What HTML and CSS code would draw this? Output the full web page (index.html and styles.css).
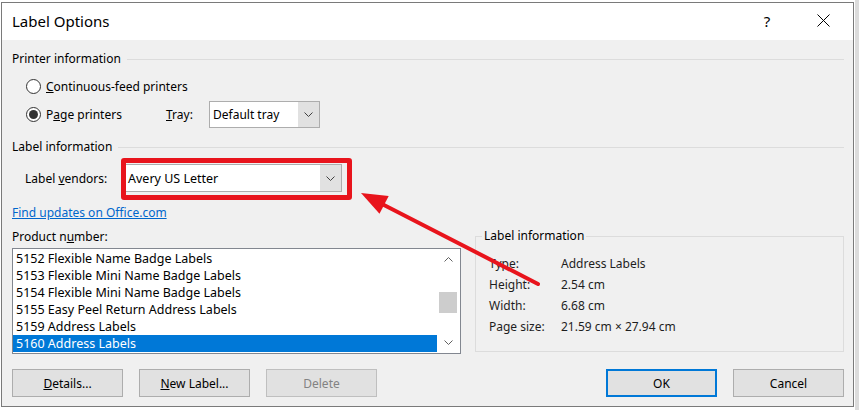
FILE: index.html
```html
<!DOCTYPE html>
<html lang="en">

<head>
    <meta charset="UTF-8">
    <meta name="viewport" content="width=device-width, initial-scale=1.0">
    <title>Label Options</title>
    <link rel="stylesheet" href="styles.css">
</head>

<body>
    <div class="screen">
        <!-- Dialog -->
        <div class="dialog">
            <div class="titlebar">
                <span class="title">Label Options</span>
                <span class="help">?</span>
                <span class="close">
                    <svg width="13" height="13" viewBox="0 0 13 13">
                        <path d="M0.5 0.5 L12.5 12.5 M12.5 0.5 L0.5 12.5" stroke="#000" stroke-width="1" fill="none"/>
                    </svg>
                </span>
            </div>

            <div class="content">
                <!-- Printer information -->
                <div class="legend"><span>Printer information</span></div>
                <div class="radio-row">
                    <span class="radio"></span>
                    <span><u>C</u>ontinuous-feed printers</span>
                </div>
                <div class="radio-row">
                    <span class="radio-label">
                        <span class="radio checked"></span>
                        <span>P<u>a</u>ge printers</span>
                    </span>
                    <span class="tray-label"><u>T</u>ray:</span>
                    <div class="combo tray">
                        <span class="combo-text">Default tray</span>
                        <span class="combo-btn">
                            <svg width="9" height="5" viewBox="0 0 9 5"><path d="M0.5 0.5 L4.5 4.5 L8.5 0.5" stroke="#404040" fill="none"/></svg>
                        </span>
                    </div>
                </div>

                <!-- Label information -->
                <div class="legend legend-label"><span>Label information</span></div>
                <div class="vendor-row">
                    <span class="vendor-label">Label <u>v</u>endors:</span>
                    <div class="highlight">
                        <div class="combo vendor">
                            <span class="combo-text">Avery US Letter</span>
                            <span class="combo-btn">
                                <svg width="9" height="5" viewBox="0 0 9 5"><path d="M0.5 0.5 L4.5 4.5 L8.5 0.5" stroke="#404040" fill="none"/></svg>
                            </span>
                        </div>
                    </div>
                </div>
                <a class="link" href="#">Find updates on Office.com</a>

                <div class="lower">
                    <div class="product">
                        <div class="product-label">Product n<u>u</u>mber:</div>
                        <div class="listbox">
                            <ul class="items">
                                <li>5152 Flexible Name Badge Labels</li>
                                <li>5153 Flexible Mini Name Badge Labels</li>
                                <li>5154 Flexible Mini Name Badge Labels</li>
                                <li>5155 Easy Peel Return Address Labels</li>
                                <li>5159 Address Labels</li>
                                <li class="selected">5160 Address Labels</li>
                            </ul>
                            <div class="scrollbar">
                                <span class="scroll-btn">
                                    <svg width="9" height="5" viewBox="0 0 9 5"><path d="M0.5 4.5 L4.5 0.5 L8.5 4.5" stroke="#606060" fill="none"/></svg>
                                </span>
                                <span class="scroll-track"><span class="thumb"></span></span>
                                <span class="scroll-btn">
                                    <svg width="9" height="5" viewBox="0 0 9 5"><path d="M0.5 0.5 L4.5 4.5 L8.5 0.5" stroke="#606060" fill="none"/></svg>
                                </span>
                            </div>
                        </div>
                    </div>

                    <fieldset class="info-box">
                        <legend>Label information</legend>
                        <div class="info-grid">
                            <span>Type:</span><span>Address Labels</span>
                            <span>Height:</span><span>2.54 cm</span>
                            <span>Width:</span><span>6.68 cm</span>
                            <span>Page size:</span><span>21.59 cm × 27.94 cm</span>
                        </div>
                    </fieldset>
                </div>

                <!-- Buttons -->
                <div class="buttons">
                    <div class="button-group">
                        <button class="btn"><u>D</u>etails...</button>
                        <button class="btn"><u>N</u>ew Label...</button>
                        <button class="btn" disabled>Delete</button>
                    </div>
                    <div class="button-group">
                        <button class="btn btn-default">OK</button>
                        <button class="btn">Cancel</button>
                    </div>
                </div>
            </div>
        </div>

        <!-- Annotation arrow -->
        <svg class="arrow" width="859" height="410" viewBox="0 0 859 410">
            <line x1="538" y1="284" x2="382" y2="204" stroke="#e8141c" stroke-width="4" stroke-linecap="round"/>
            <polygon points="361,193 379.5,213.8 388.7,196" fill="#e8141c"/>
        </svg>
    </div>
</body>

</html>
```

FILE: styles.css
```css
body {
    margin: 0;
    padding: 0;
    font-family: "Noto Sans", "Open Sans", sans-serif;
    font-size: 12px;
    color: #000;
    background-color: #fff;
}

.screen {
    position: relative;
    width: 859px;
    height: 410px;
    overflow: hidden;
    padding: 2px 0 0 1px;
    box-sizing: border-box;
    background: linear-gradient(to right, #fff 855px, #dcdcdc 855px);
}

.dialog {
    width: 853px;
    height: 405px;
    box-sizing: border-box;
    border: 1px solid #7a7a7a;
    background-color: #f0f0f0;
    display: flex;
    flex-direction: column;
}

.titlebar {
    height: 37px;
    background-color: #fff;
    display: flex;
    align-items: center;
    padding-left: 10px;
}

.title {
    font-size: 15px;
    flex: 1;
    padding-bottom: 1px;
}

.help {
    font-size: 15px;
    width: 14px;
    text-align: center;
    margin-right: 43px;
    padding-bottom: 2px;
}

.close {
    width: 13px;
    height: 13px;
    margin-right: 23px;
    margin-bottom: 3px;
}

.close svg {
    display: block;
}

.content {
    flex: 1;
    padding: 11px 9px 0 10px;
    display: flex;
    flex-direction: column;
}

.legend {
    height: 16px;
    line-height: 16px;
    display: flex;
    align-items: center;
}

.legend::after {
    content: "";
    flex: 1;
    height: 1px;
    margin-left: 6px;
    background-color: #dcdcdc;
}

.legend-label {
    margin-top: 11px;
}

.radio-row {
    height: 28px;
    display: flex;
    align-items: center;
    padding-left: 14px;
}

.legend + .radio-row {
    margin-top: 5px;
}

.radio {
    width: 15px;
    height: 15px;
    box-sizing: border-box;
    border: 1px solid #333;
    border-radius: 50%;
    background-color: #fff;
    margin-right: 5px;
    display: flex;
    align-items: center;
    justify-content: center;
}

.radio.checked::after {
    content: "";
    width: 9px;
    height: 9px;
    border-radius: 50%;
    background-color: #333;
}

.radio-label {
    width: 140px;
    display: flex;
    align-items: center;
}

.tray-label {
    width: 43px;
}

.combo {
    height: 27px;
    box-sizing: border-box;
    border: 1px solid #adadad;
    background-color: #fff;
    display: flex;
    align-items: stretch;
}

.combo-text {
    flex: 1;
    padding-left: 3px;
    display: flex;
    align-items: center;
}

.combo-btn {
    width: 21px;
    background-color: #e1e1e1;
    display: flex;
    align-items: center;
    justify-content: center;
}

.tray {
    width: 111px;
}

.vendor-row {
    margin-top: 9px;
    height: 28px;
    display: flex;
    align-items: center;
    padding-left: 13px;
}

.vendor-label {
    width: 99px;
}

.highlight {
    position: relative;
}

.highlight::after {
    content: "";
    position: absolute;
    left: -3px;
    top: -6px;
    right: -10px;
    bottom: -8px;
    border: 5px solid #e8141c;
    border-radius: 3px;
}

.vendor {
    width: 218px;
    height: 28px;
    font-size: 12.5px;
}

.link {
    margin-top: 13px;
    height: 16px;
    line-height: 16px;
    color: #0066cc;
    text-decoration: underline;
    align-self: flex-start;
}

.lower {
    margin-top: 8px;
    display: flex;
    align-items: flex-start;
}

.product-label {
    height: 16px;
    line-height: 16px;
}

.listbox {
    margin-top: 3px;
    width: 449px;
    height: 106px;
    box-sizing: border-box;
    border: 1px solid #828790;
    background-color: #fff;
    display: flex;
}

.items {
    list-style: none;
    margin: 0;
    padding: 1px 0;
    flex: 1;
    font-size: 12.5px;
}

.items li {
    height: 17px;
    line-height: 17px;
    padding-left: 3px;
    margin-right: 1px;
}

.items li.selected {
    background-color: #0078d7;
    color: #fff;
}

.scrollbar {
    width: 22px;
    display: flex;
    flex-direction: column;
}

.scroll-btn {
    height: 21px;
    display: flex;
    align-items: center;
    justify-content: center;
    padding-right: 2px;
}

.scroll-track {
    flex: 1;
    padding: 22px 3px 0 1px;
}

.thumb {
    display: block;
    height: 21px;
    background-color: #cdcdcd;
}

.info-box {
    margin: 0 0 0 14px;
    padding: 10px 0 0 13px;
    width: 369px;
    height: 123px;
    box-sizing: border-box;
    border: 1px solid #dcdcdc;
}

.info-box legend {
    padding: 0 2px;
    margin-left: -7px;
    line-height: 14px;
}

.info-grid {
    display: grid;
    grid-template-columns: 72px 1fr;
    grid-auto-rows: 21px;
    align-items: center;
    color: #1e1e1e;
}

.buttons {
    margin-top: 15px;
    display: flex;
    justify-content: space-between;
}

.button-group {
    display: flex;
    gap: 16px;
}

.btn {
    width: 111px;
    height: 28px;
    box-sizing: border-box;
    border: 1px solid #adadad;
    background-color: #e1e1e1;
    font-family: inherit;
    font-size: 12px;
    color: #000;
    padding: 0;
}

.btn:disabled {
    color: #838383;
    border-color: #bfbfbf;
    background-color: #e1e1e1;
}

.btn-default {
    border: 2px solid #0078d7;
}

.arrow {
    position: absolute;
    left: 0;
    top: 0;
    pointer-events: none;
}
```
